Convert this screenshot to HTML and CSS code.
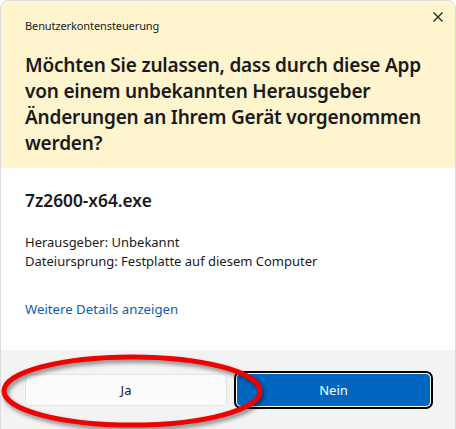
FILE: index.html
```html
<!DOCTYPE html>
<html lang="de">
<head>
    <meta charset="UTF-8">
    <title>Benutzerkontensteuerung</title>
    <link rel="stylesheet" href="styles.css">
</head>
<body>

<div class="uac-window">
    <div class="uac-head">
        <div class="uac-title">Benutzerkontensteuerung</div>
        <button class="close-btn" aria-label="Schließen">
            <svg width="10" height="10" viewBox="0 0 10 10">
                <path d="M0.5 0.5 L9.5 9.5 M9.5 0.5 L0.5 9.5" stroke="#1a1a1a" stroke-width="1.1"/>
            </svg>
        </button>
        <h1 class="uac-question">Möchten Sie zulassen, dass durch diese App<br>von einem unbekannten Herausgeber<br>Änderungen an Ihrem Gerät vorgenommen<br>werden?</h1>
    </div>

    <div class="uac-body">
        <p class="app-name">7z2600-x64.exe</p>
        <p class="app-info">Herausgeber: Unbekannt</p>
        <p class="app-info">Dateiursprung: Festplatte auf diesem Computer</p>
        <a href="#" class="details-link">Weitere Details anzeigen</a>
    </div>

    <div class="uac-footer">
        <button class="btn btn-yes">Ja</button>
        <button class="btn btn-no">Nein</button>
    </div>

    <!-- rote Markierung um "Ja" -->
    <svg class="marker" width="266" height="80" viewBox="0 0 266 80">
        <ellipse cx="131" cy="38" rx="128" ry="34" fill="none" stroke="#f00000" stroke-width="5"/>
    </svg>
</div>

</body>
</html>
```

FILE: styles.css
```css
body {
    font-family: "Noto Sans", "Open Sans", sans-serif;
    margin: 0;
    padding: 0;
    background: #ffffff;
    color: #1a1a1a;
}

.uac-window {
    position: relative;
    width: 456px;
    height: 429px;
    box-sizing: border-box;
    border: 1px solid #dcdcdc;
    border-bottom: none;
    border-radius: 8px 8px 0 0;
    overflow: hidden;
    display: flex;
    flex-direction: column;
}

.uac-head {
    position: relative;
    background-color: #fef4ce;
    padding: 17px 24px 12px 24px;
}

.uac-title {
    font-size: 11px;
    line-height: 16px;
    letter-spacing: -0.1px;
}

.close-btn {
    position: absolute;
    top: 9px;
    right: 10px;
    width: 14px;
    height: 14px;
    padding: 0;
    border: none;
    background: none;
    display: flex;
    align-items: center;
    justify-content: center;
}

.uac-question {
    font-size: 19px;
    font-weight: 600;
    line-height: 26px;
    margin: 18px 0 0 0;
    letter-spacing: -0.2px;
    white-space: nowrap;
}

.uac-body {
    flex: 1;
    padding: 21px 24px 0 24px;
    display: flex;
    flex-direction: column;
    align-items: flex-start;
}

.app-name {
    font-size: 17.3px;
    font-weight: 600;
    line-height: 24px;
    margin: 0 0 20px 0;
}

.app-info {
    font-size: 13px;
    line-height: 19px;
    margin: 0;
}

.details-link {
    margin-top: 29px;
    font-size: 13.2px;
    line-height: 19px;
    color: #0f5bb0;
    text-decoration: none;
}

.uac-footer {
    background-color: #f3f3f3;
    height: 79px;
    box-sizing: border-box;
    padding: 24px 0 0 24px;
    display: flex;
    gap: 10px;
    align-items: flex-start;
}

.btn {
    height: 32px;
    font-family: inherit;
    font-size: 13px;
    border-radius: 4px;
}

.btn-yes {
    width: 202px;
    background-color: #fbfbfb;
    border: 1px solid #e3e3e3;
    color: #1a1a1a;
}

.btn-no {
    width: 193px;
    background-color: #0067c0;
    border: 1px solid #0067c0;
    color: #ffffff;
    box-shadow: 0 0 0 1px #ffffff, 0 0 0 3px #000000;
}

.marker {
    position: absolute;
    left: 0;
    top: 352px;
    filter: drop-shadow(2px 3px 2px rgba(0, 0, 0, 0.45));
}
```
